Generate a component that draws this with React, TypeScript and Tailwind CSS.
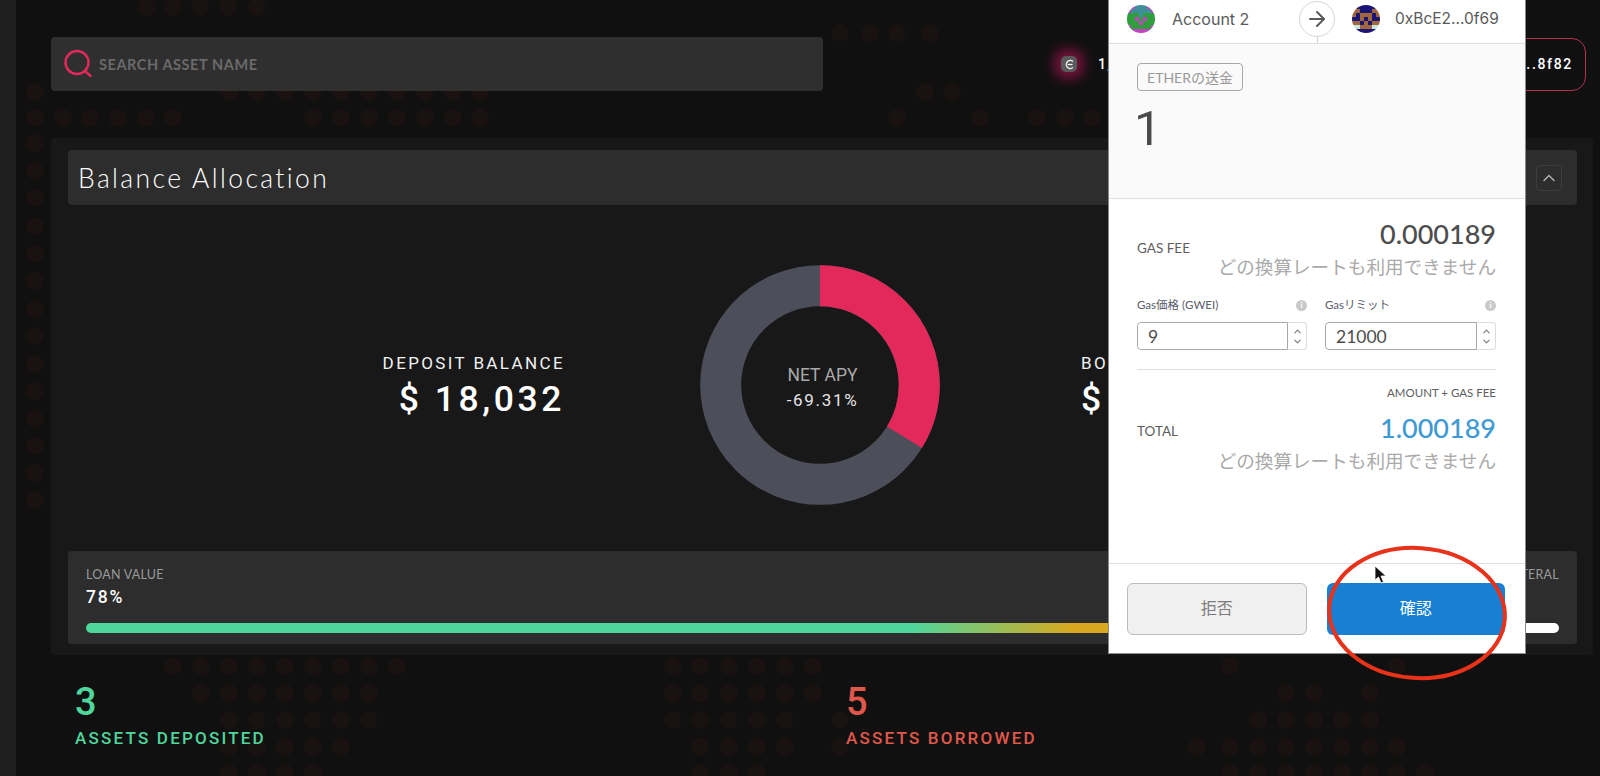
import React from "react";
import { ArrowRight, ChevronDown, ChevronUp } from "lucide-react";

const roboto = "font-['Roboto',sans-serif]";
const jp = "font-['Lato','Noto_Sans_CJK_JP',sans-serif]";

// background dot field: [y, x positions]
const dotRows: [number, number[]][] = [
  [7, [147, 173, 200, 228, 257]],
  [33, [840, 870, 897, 930]],
  [92, [35, 230, 257, 285, 313, 341, 369, 397, 425, 453, 480, 925, 952]],
  [118, [35, 63, 90, 118, 146, 173, 313, 341, 369, 397, 425, 453, 480, 897, 980, 1037, 1065, 1092]],
  [143, [35]],
  [171, [35]],
  [198, [35]],
  [226, [35]],
  [254, [35]],
  [281, [35]],
  [309, [35]],
  [336, [35]],
  [364, [35]],
  [391, [35]],
  [419, [35]],
  [446, [35]],
  [473, [35]],
  [500, [35]],
  [666, [173, 201, 229, 257, 285, 313, 341, 369, 397, 673, 700, 729, 757, 785, 813, 1230, 1397]],
  [693, [201, 229, 257, 285, 313, 341, 369, 673, 700, 729, 757, 785, 813, 1286, 1314, 1370]],
  [720, [229, 257, 285, 313, 341, 369, 673, 700, 729, 757, 785, 840, 1258, 1286, 1314, 1342, 1370]],
  [747, [229, 257, 285, 313, 341, 700, 729, 757, 785, 840, 1197, 1230, 1258, 1286, 1314, 1342, 1370, 1397]],
  [773, [229, 257, 285, 313, 700, 729, 757, 1230, 1258, 1286, 1314, 1342, 1370, 1397, 1425]],
];

function DotField() {
  return (
    <svg className="absolute inset-0" width="1600" height="776">
      {dotRows.map(([y, xs]) =>
        xs.map((x) => <circle key={`${x}-${y}`} cx={x} cy={y} r="9" fill="#1a1211" />)
      )}
    </svg>
  );
}

function Identicon({ cells, colors }: { cells: string[]; colors: string[] }) {
  return (
    <svg width="28" height="28" viewBox="0 0 7 7" className="rounded-full shrink-0">
      {cells.map((row, y) =>
        row.split("").map((c, x) => (
          <rect key={`${x}-${y}`} x={x} y={y} width="1.02" height="1.02" fill={colors[Number(c)]} />
        ))
      )}
    </svg>
  );
}

function Spinner() {
  return (
    <div className="flex w-[19px] flex-col items-center justify-center rounded-r-[4px] border border-l-0 border-[#dcdcdc] text-[#777777]">
      <ChevronUp size={11} strokeWidth={2.2} className="-mb-[1px]" />
      <ChevronDown size={11} strokeWidth={2.2} />
    </div>
  );
}

function GasInput({ label, value, className }: { label: string; value: string; className: string }) {
  return (
    <div className={className}>
      <div className="flex h-[14px] items-center justify-between text-[11.5px] text-[#5b5b6b]">
        <span>{label}</span>
        <span className="flex h-[11px] w-[11px] items-center justify-center rounded-full bg-[#c9c9c9] text-[8px] font-bold leading-none text-white">
          i
        </span>
      </div>
      <div className="mt-[10px] flex h-[28px]">
        <div className="flex-1 rounded-l-[4px] border border-[#a8a8a8] pl-[10px] text-[17.5px] leading-[28px] text-[#4d4d4d]">
          {value}
        </div>
        <Spinner />
      </div>
    </div>
  );
}

function MetamaskPopup() {
  const noRate = "どの換算レートも利用できません";
  return (
    <div className={`absolute left-[1109px] top-0 flex h-[653px] w-[416px] flex-col bg-white shadow-[0_0_0_1px_#8a8a8a] ${jp}`}>
      {/* from / to */}
      <div className="relative flex h-[44px] shrink-0 items-center border-b border-[#dedede] pb-[6px] pl-[18px] font-['Inter',sans-serif] text-[15.5px] text-[#5a5a5a]">
        <Identicon
          cells={["0011100", "0111110", "2221222", "2202022", "2220222", "0222220", "0000000"]}
          colors={["#c243c6", "#3f8f9a", "#2f9e3c"]}
        />
        <span className="ml-[17px] w-[180px] text-[16px]">Account 2</span>
        <div className="absolute left-[190px] top-[1px] flex h-[36px] w-[36px] items-center justify-center rounded-full border border-[#d6d6d6] bg-white text-[#5a5a5a]">
          <ArrowRight size={24} strokeWidth={2} />
        </div>
        <div className="absolute left-[208px] top-[37px] h-[6px] w-px bg-[#d6d6d6]" />
        <Identicon
          cells={["1111111", "0011100", "0100010", "1101011", "0010100", "2200022", "0111110"]}
          colors={["#a0673a", "#1a1478", "#c7e8d8"]}
        />
        <span className="ml-[15px]">0xBcE2...0f69</span>
      </div>

      {/* amount */}
      <div className="flex h-[155px] shrink-0 flex-col items-start border-b border-[#dedede] bg-[#fafafa] pl-[28px] pt-[19px]">
        <span className="flex h-[28px] w-[106px] items-center justify-center rounded-[4px] border border-[#a8a8a8] text-[14px] text-[#999999]">
          ETHERの送金
        </span>
        <span className="-ml-[3px] mt-[9px] font-['Roboto',sans-serif] text-[49px] font-normal leading-[58px] text-[#4a4a4a]">1</span>
      </div>

      {/* gas details */}
      <div className="flex flex-1 flex-col pl-[28px] pr-[29px] pt-[19px]">
        <div className="flex items-start justify-between">
          <span className="mt-[20px] text-[13.5px] leading-[20px] text-[#5d5d5d]">GAS FEE</span>
          <div className="text-right">
            <div className="text-[27px] font-medium leading-[32px] text-[#4d4d4d]">0.000189</div>
            <div className="text-[18.6px] leading-[34px] text-[#aaaaaa]">{noRate}</div>
          </div>
        </div>
        <div className="mt-[14px] flex justify-between">
          <GasInput label="Gas価格 (GWEI)" value="9" className="w-[170px]" />
          <GasInput label="Gasリミット" value="21000" className="w-[171px]" />
        </div>
        <div className="mt-[19px] h-px bg-[#dedede]" />
        <div className="mt-[16px] text-right text-[11.5px] leading-[14px] text-[#5d5d5d]">AMOUNT + GAS FEE</div>
        <div className="mt-[12px] flex items-start justify-between">
          <span className="mt-[9px] text-[13.5px] leading-[20px] text-[#5d5d5d]">TOTAL</span>
          <div className="text-right">
            <div className="text-[27px] font-medium leading-[32px] text-[#3d9ad4]">1.000189</div>
            <div className="text-[18.6px] leading-[34px] text-[#aaaaaa]">{noRate}</div>
          </div>
        </div>
      </div>

      {/* actions */}
      <div className="flex h-[90px] shrink-0 gap-[20px] border-t border-[#dedede] pl-[18px] pr-[20px] pt-[19px]">
        <button className="h-[52px] w-[180px] rounded-[6px] border border-[#bcbcbc] bg-[#f0f0f0] pb-[3px] text-[16px] text-[#7d7d7d]">
          拒否
        </button>
        <button className="h-[52px] w-[179px] rounded-[6px] bg-[#1780d3] pb-[3px] text-[16px] text-white">確認</button>
      </div>
    </div>
  );
}

function Donut() {
  return (
    <div className="relative h-[240px] w-[240px] shrink-0">
      <svg width="240" height="240" viewBox="0 0 240 240" className="-rotate-90">
        <circle cx="120" cy="120" r="99.3" fill="none" stroke="#4c4e59" strokeWidth="41" />
        <circle cx="120" cy="120" r="99.3" fill="none" stroke="#e3295a" strokeWidth="41" strokeDasharray="210.6 624" />
      </svg>
      <div className="absolute inset-0 flex flex-col items-center justify-center pl-[5px] pt-[5px]">
        <span className="text-[17.5px] leading-[25px] text-[#a9a9a9]">NET APY</span>
        <span className="text-[17px] leading-[24px] tracking-[0.1em] text-[#e4e4e4]">-69.31%</span>
      </div>
    </div>
  );
}

export default function App() {
  return (
    <div className={`relative flex h-[776px] w-[1600px] overflow-hidden bg-[#101010] ${roboto}`}>
      <DotField />
      <div className="relative w-4 shrink-0 bg-[#1f1f1f]" />

      <main className="relative flex-1 pl-[35px] pr-[7px] pt-[37px]">
        {/* top bar */}
        <div className="flex h-[54px] items-center">
          <div className="flex h-[54px] w-[772px] items-center rounded-[4px] bg-[#2f2f2f] pl-[12px]">
            <svg width="30" height="30" viewBox="0 0 30 30" fill="none" stroke="#e3295a" strokeWidth="2.4">
              <circle cx="14" cy="13.5" r="11.5" />
              <path d="M22 22l5.5 5" strokeLinecap="round" />
            </svg>
            <span className="ml-[6px] mt-[1px] font-['Lato',sans-serif] text-[14.5px] font-bold tracking-[0.04em] text-[#6a6a6a]">
              SEARCH ASSET NAME
            </span>
          </div>
          <div className="ml-[238px] flex h-[16px] w-[16px] items-center justify-center rounded-[5px] bg-[#5a5a5a] shadow-[0_0_12px_7px_#75133a]">
            <svg width="11" height="11" viewBox="0 0 11 11" fill="none" stroke="#f2f2f2" strokeWidth="1.3">
              <path d="M9 2.6A4 4 0 1 0 9 8.4" />
              <path d="M3.5 5.5h5" />
            </svg>
          </div>
          <span className="ml-[21px] text-[14px] font-medium tracking-[0.1em] text-white">1,</span>
          <div className="ml-auto mr-[7px] mt-[1px] flex h-[53px] w-[200px] items-center justify-end rounded-r-[14px] border-[1.5px] border-[#b8304f] pr-[12px] text-[14px] font-medium tracking-[0.12em] text-white">
            ..8f82
          </div>
        </div>

        {/* balance panel */}
        <section className="mt-[47px] h-[517px] rounded-[4px] bg-[#181818] pl-[17px] pr-[16px] pt-[12px]">
          <header className="flex h-[55px] items-center justify-between rounded-[4px] bg-[#2d2d2d] pl-[10px] pr-[15px]">
            <h2 className="mt-[2px] font-['Lato',sans-serif] text-[26.5px] font-light tracking-[0.09em] text-white">
              Balance Allocation
            </h2>
            <div className="flex h-[26px] w-[26px] items-center justify-center rounded-[4px] border border-[#3d3d3d] text-[#b5b5b5]">
              <ChevronUp size={20} strokeWidth={1.6} />
            </div>
          </header>

          <div className="flex h-[346px] items-center pt-[18px]">
            <div className="w-[497px] shrink-0 text-right">
              <div className="text-[17px] font-normal leading-[24px] tracking-[0.14em] text-[#f2f2f2]">
                DEPOSIT BALANCE
              </div>
              <div className="text-[35.5px] font-medium leading-[48px] tracking-[0.1em] text-white">$ 18,032</div>
            </div>
            <div className="ml-[135px] -mt-[4px]">
              <Donut />
            </div>
            <div className="ml-[141px]">
              <div className="text-[17px] font-normal leading-[24px] tracking-[0.14em] text-[#f2f2f2]">
                BORROW BALANCE
              </div>
              <div className="text-[35.5px] font-medium leading-[48px] tracking-[0.1em] text-white">$ 12,498</div>
            </div>
          </div>

          <div className="h-[93px] rounded-[4px] bg-[#2d2d2d] px-[18px] pt-[16px]">
            <div className="flex justify-between font-['Lato',sans-serif] text-[12.5px] tracking-[0.02em] leading-[16px] text-[#9a9a9a]">
              <span>LOAN VALUE</span>
              <span>COLLATERAL</span>
            </div>
            <div className="mt-[2px] text-[17.5px] font-medium leading-[24px] tracking-[0.1em] text-white">78%</div>
            <div className="mt-[14px] h-[10px] rounded-full bg-[linear-gradient(90deg,#4fd69c_0%,#4fd69c_56%,#d9a81f_67%,#d9a81f_90%,#ffffff_92%)]" />
          </div>
        </section>

        {/* asset counts */}
        <div className="mt-[25px] flex pl-[24px]">
          <div className="w-[771px] text-[#4fd69c]">
            <div className="text-[38px] font-medium leading-[44px]">3</div>
            <div className="mt-[2px] text-[17px] font-medium leading-[24px] tracking-[0.13em]">ASSETS DEPOSITED</div>
          </div>
          <div className="text-[#e0584c]">
            <div className="text-[38px] font-medium leading-[44px]">5</div>
            <div className="mt-[2px] text-[17px] font-medium leading-[24px] tracking-[0.13em]">ASSETS BORROWED</div>
          </div>
        </div>
      </main>

      <MetamaskPopup />

      {/* red marker circle around the confirm button */}
      <svg className="absolute left-[1320px] top-[540px]" width="200" height="150" fill="none">
        <ellipse cx="97" cy="73" rx="88" ry="65" stroke="#e8321a" strokeWidth="4" transform="rotate(4 97 73)" />
      </svg>
      {/* mouse pointer */}
      <svg className="absolute left-[1374px] top-[565px]" width="14" height="20" viewBox="0 0 14 20">
        <path d="M1 1v14l3.5-3 2.5 6 2.5-1-2.5-6H12z" fill="#111" stroke="#fff" strokeWidth="0.8" />
      </svg>
    </div>
  );
}
